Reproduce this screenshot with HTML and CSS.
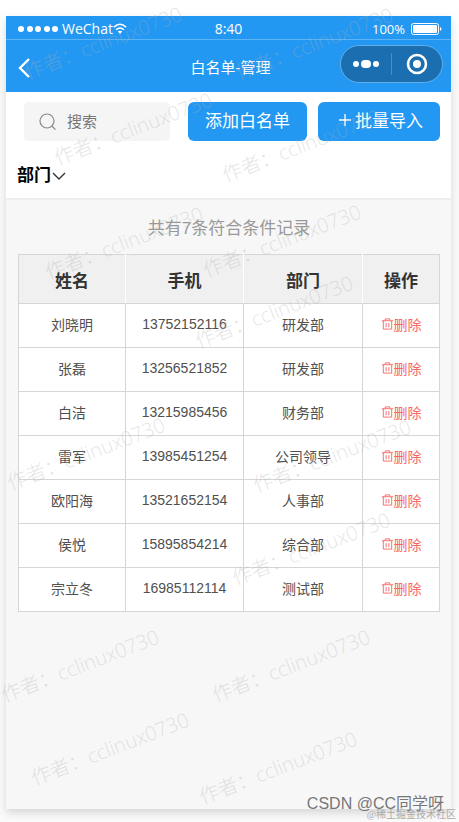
FILE: index.html
```html
<!DOCTYPE html>
<html lang="zh-CN">
<head>
  <meta charset="UTF-8">
  <meta name="viewport" content="width=device-width, initial-scale=1.0">
  <title>白名单-管理</title>
  <link rel="stylesheet" href="styles.css">
</head>
<body>

  <svg class="sprite" aria-hidden="true">
    <symbol id="trash" viewBox="0 0 14 14">
      <path d="M1 3.5h12M4.5 3.5V1.5h5v2M2.5 3.5v9h9v-9M5.5 6v4.5M8.5 6v4.5" fill="none" stroke="currentColor"/>
    </symbol>
  </svg>

  <div class="phone">
    <header class="header">
      <div class="status">
        <div class="carrier">
          <svg width="41" height="8" viewBox="0 0 41 8" fill="#fff">
            <circle cx="3" cy="4" r="3"/><circle cx="12" cy="4" r="3"/><circle cx="20" cy="4" r="3"/><circle cx="29" cy="4" r="3"/><circle cx="37" cy="4" r="3"/>
          </svg>
          <span class="carrier-name">WeChat</span>
          <svg width="14" height="12" viewBox="0 0 14 12" fill="none" stroke="#fff" stroke-width="1.5">
            <path d="M.8 4.3Q7-1.7 13.2 4.3M3 6.8q4-3.6 8 0"/>
            <path d="M4.8 8.6q2.2-1.8 4.4 0L7 11z" fill="#fff" stroke="none"/>
          </svg>
        </div>
        <span class="time">8:40</span>
        <div class="battery">
          <span>100%</span>
          <svg width="32" height="12" viewBox="0 0 32 12">
            <rect x=".5" y=".5" width="27" height="11" rx="2" fill="none" stroke="#fff"/>
            <rect x="2" y="2" width="24" height="8" rx="1" fill="#fff"/>
            <path d="M29 4q3 2 0 4z" fill="#fff"/>
          </svg>
        </div>
      </div>
      <div class="nav">
        <button class="back" aria-label="返回">
          <svg width="12" height="20" viewBox="0 0 12 20" fill="none" stroke="#fff" stroke-width="2.4"><path d="M11 1L2 10l9 9"/></svg>
        </button>
        <h1>白名单-管理</h1>
        <div class="capsule">
          <button aria-label="更多">
            <svg width="28" height="8" viewBox="0 0 28 8" fill="#fff"><circle cx="4" cy="4" r="3"/><rect x="9" y="0" width="10" height="8" rx="4"/><circle cx="24" cy="4" r="3"/></svg>
          </button>
          <button aria-label="关闭">
            <svg width="22" height="22" viewBox="0 0 22 22"><circle cx="11" cy="11" r="9" fill="none" stroke="#fff" stroke-width="2.6"/><circle cx="11" cy="11" r="4" fill="#fff"/></svg>
          </button>
        </div>
      </div>
    </header>

    <div class="toolbar">
      <div class="actions">
        <label class="search">
          <svg width="18" height="18" viewBox="0 0 18 18" fill="none" stroke="#858a8d" stroke-width="1.2"><circle cx="8" cy="8" r="7"/><path d="M12.8 13l3.7 3.7"/></svg>
          <input type="text" placeholder="搜索" aria-label="搜索">
        </label>
        <button class="btn">添加白名单</button>
        <button class="btn">
          <svg width="12" height="12" viewBox="0 0 12 12" stroke="#fff" stroke-width="1.3"><path d="M6 0v12M0 6h12"/></svg>
          批量导入
        </button>
      </div>
      <button class="filter">部门<svg width="14" height="8" viewBox="0 0 14 8" fill="none" stroke="#333" stroke-width="1.4"><path d="M1 1l6 6 6-6"/></svg></button>
    </div>

    <main class="content">
      <p class="summary">共有7条符合条件记录</p>
      <table class="list">
        <thead>
          <tr><th class="col-name">姓名</th><th class="col-phone">手机</th><th class="col-dept">部门</th><th>操作</th></tr>
        </thead>
        <tbody>
          <tr><td>刘晓明</td><td>13752152116</td><td>研发部</td><td><button class="del"><svg><use href="#trash"/></svg>删除</button></td></tr>
          <tr><td>张磊</td><td>13256521852</td><td>研发部</td><td><button class="del"><svg><use href="#trash"/></svg>删除</button></td></tr>
          <tr><td>白洁</td><td>13215985456</td><td>财务部</td><td><button class="del"><svg><use href="#trash"/></svg>删除</button></td></tr>
          <tr><td>雷军</td><td>13985451254</td><td>公司领导</td><td><button class="del"><svg><use href="#trash"/></svg>删除</button></td></tr>
          <tr><td>欧阳海</td><td>13521652154</td><td>人事部</td><td><button class="del"><svg><use href="#trash"/></svg>删除</button></td></tr>
          <tr><td>侯悦</td><td>15895854214</td><td>综合部</td><td><button class="del"><svg><use href="#trash"/></svg>删除</button></td></tr>
          <tr><td>宗立冬</td><td>16985112114</td><td>测试部</td><td><button class="del"><svg><use href="#trash"/></svg>删除</button></td></tr>
        </tbody>
      </table>
    </main>
  </div>

  <!-- watermark layer -->
  <svg class="marks" aria-hidden="true">
    <text transform="translate(103 43) rotate(-21)" dy="7">作者：cclinux0730</text>
    <text transform="translate(314 44) rotate(-21)" dy="7">作者：cclinux0730</text>
    <text transform="translate(133 129) rotate(-21)" dy="7">作者：cclinux0730</text>
    <text transform="translate(301 146) rotate(-21)" dy="7">作者：cclinux0730</text>
    <text transform="translate(124 243) rotate(-21)" dy="7">作者：cclinux0730</text>
    <text transform="translate(282 241) rotate(-21)" dy="7">作者：cclinux0730</text>
    <text transform="translate(274 312) rotate(-21)" dy="7">作者：cclinux0730</text>
    <text transform="translate(86 454) rotate(-21)" dy="7">作者：cclinux0730</text>
    <text transform="translate(332 456) rotate(-21)" dy="7">作者：cclinux0730</text>
    <text transform="translate(311 549) rotate(-21)" dy="7">作者：cclinux0730</text>
    <text transform="translate(80 666) rotate(-21)" dy="7">作者：cclinux0730</text>
    <text transform="translate(291 666) rotate(-21)" dy="7">作者：cclinux0730</text>
    <text transform="translate(110 749) rotate(-21)" dy="7">作者：cclinux0730</text>
    <text transform="translate(278 768) rotate(-21)" dy="7">作者：cclinux0730</text>
  </svg>
  <div class="credit">CSDN @CC同学呀</div>
  <div class="community">@稀土掘金技术社区</div>

</body>
</html>
```
FILE: styles.css
```css
* {
  box-sizing: border-box;
}
body {
  margin: 0;
  min-height: 100vh;
  padding: 16px 8px 13px 6px;
  display: flex;
  position: relative;
  overflow-x: hidden;
  background: linear-gradient(#fff, #fafafa 90px);
  font-family: "Liberation Sans", "Noto Sans CJK SC", sans-serif;
  color: #505050;
}
button {
  padding: 0;
  border: none;
  background: none;
  font-family: inherit;
  cursor: pointer;
}
svg {
  flex: none;
}
.sprite {
  position: absolute;
  width: 0;
  height: 0;
}
.phone {
  flex: 1;
  display: flex;
  flex-direction: column;
  background: #f7f7f7;
  box-shadow: 0 4px 8px rgba(0, 0, 0, 0.14);
}
.header {
  background: #2398f2;
  color: #fff;
}
.status {
  display: grid;
  grid-template-columns: 1fr auto 1fr;
  align-items: center;
  height: 24px;
  padding: 3px 12px 0 12px;
  border-bottom: 1px solid #5db4f5;
  font-family: "Open Sans", sans-serif;
  font-size: 14px;
  line-height: 20px;
}
.carrier, .battery {
  display: flex;
  align-items: center;
}
.carrier-name {
  margin-left: 3px;
}
.battery {
  justify-content: flex-end;
  gap: 6px;
  margin-right: -4px;
  font-size: 13px;
}
.nav {
  display: grid;
  grid-template-columns: 1fr auto 1fr;
  align-items: center;
  height: 52px;
  padding: 0 8px 0 12px;
}
.nav h1 {
  margin: 0;
  font-family: "Open Sans", "Noto Sans CJK SC", sans-serif;
  font-size: 15px;
  font-weight: 400;
}
.back {
  justify-self: start;
  display: flex;
  margin-top: 4px;
}
.capsule {
  justify-self: end;
  display: flex;
  align-items: center;
  width: 103px;
  height: 38px;
  margin-bottom: 4px;
  border: 1px solid #65aee6;
  border-radius: 19px;
  background: #1b6eb0;
}
.capsule button {
  flex: 1;
  display: flex;
  justify-content: center;
}
.capsule button + button {
  border-left: 1px solid #4a90c8;
}
.toolbar {
  height: 108px;
  padding: 10px 11px 0;
  background: #fff;
  border-bottom: 2px solid #eee;
}
.actions {
  display: flex;
  gap: 11px;
  padding-left: 7px;
}
.search {
  flex: 1;
  min-width: 0;
  display: flex;
  align-items: center;
  gap: 10px;
  height: 39px;
  margin-right: 7px;
  padding: 0 15px;
  border-radius: 5px;
  background: #f5f5f5;
}
.search input {
  width: 100%;
  min-width: 0;
  padding: 0;
  border: none;
  outline: none;
  background: none;
  font-family: inherit;
  font-size: 15px;
}
.search input::placeholder {
  color: #777;
}
.btn {
  display: flex;
  align-items: center;
  justify-content: center;
  gap: 4px;
  height: 39px;
  padding: 0 17px 4px;
  border-radius: 6px;
  background: #2398f2;
  color: #fff;
  font-size: 17px;
}
.btn svg {
  margin-left: 4px;
}
.filter {
  display: flex;
  align-items: center;
  gap: 1px;
  margin-top: 23px;
  color: #000;
  font-size: 17px;
  font-weight: 700;
  line-height: 24px;
}
.content {
  flex: 1;
  padding: 16px 11px 0 12px;
}
.summary {
  margin: 0 0 13px;
  text-align: center;
  font-size: 17px;
  line-height: 25px;
  color: #999;
}
.list {
  width: 100%;
  table-layout: fixed;
  border: 1px solid #d6d6d6;
  border-collapse: collapse;
  background: #fff;
  text-align: center;
}
.list th, .list td {
  padding: 0 0 3px;
  border: 1px solid #d6d6d6;
}
.list th {
  height: 49px;
  background: #f0f0f0;
  color: #333;
  font-size: 17px;
  padding: 0;
}
.list th + th {
  border-left-color: #fff;
}
.list th:not(:last-child) {
  border-right-color: #fff;
}
.list td {
  height: 44px;
  font-size: 14px;
}
.col-name {
  width: 107px;
}
.col-phone {
  width: 118px;
}
.col-dept {
  width: 119px;
}
.del {
  display: inline-flex;
  align-items: center;
  color: #f66767;
  font-size: 14px;
}
.del svg {
  width: 13px;
  height: 14px;
}
.marks {
  position: absolute;
  inset: 0;
  width: 100%;
  height: 100%;
  pointer-events: none;
  fill: rgba(175, 175, 175, 0.34);
  font-family: "Open Sans", "Noto Sans CJK SC", sans-serif;
  font-size: 20px;
  font-weight: 300;
  text-anchor: middle;
}
.credit, .community {
  position: absolute;
  white-space: nowrap;
}
.credit {
  right: 15px;
  bottom: 7px;
  font-size: 16px;
  line-height: 22px;
  color: #777;
}
.community {
  right: 3px;
  bottom: 0;
  font-family: "Liberation Serif", "Noto Sans CJK SC", serif;
  font-size: 10px;
  line-height: 15px;
  color: #aaa;
}
```
